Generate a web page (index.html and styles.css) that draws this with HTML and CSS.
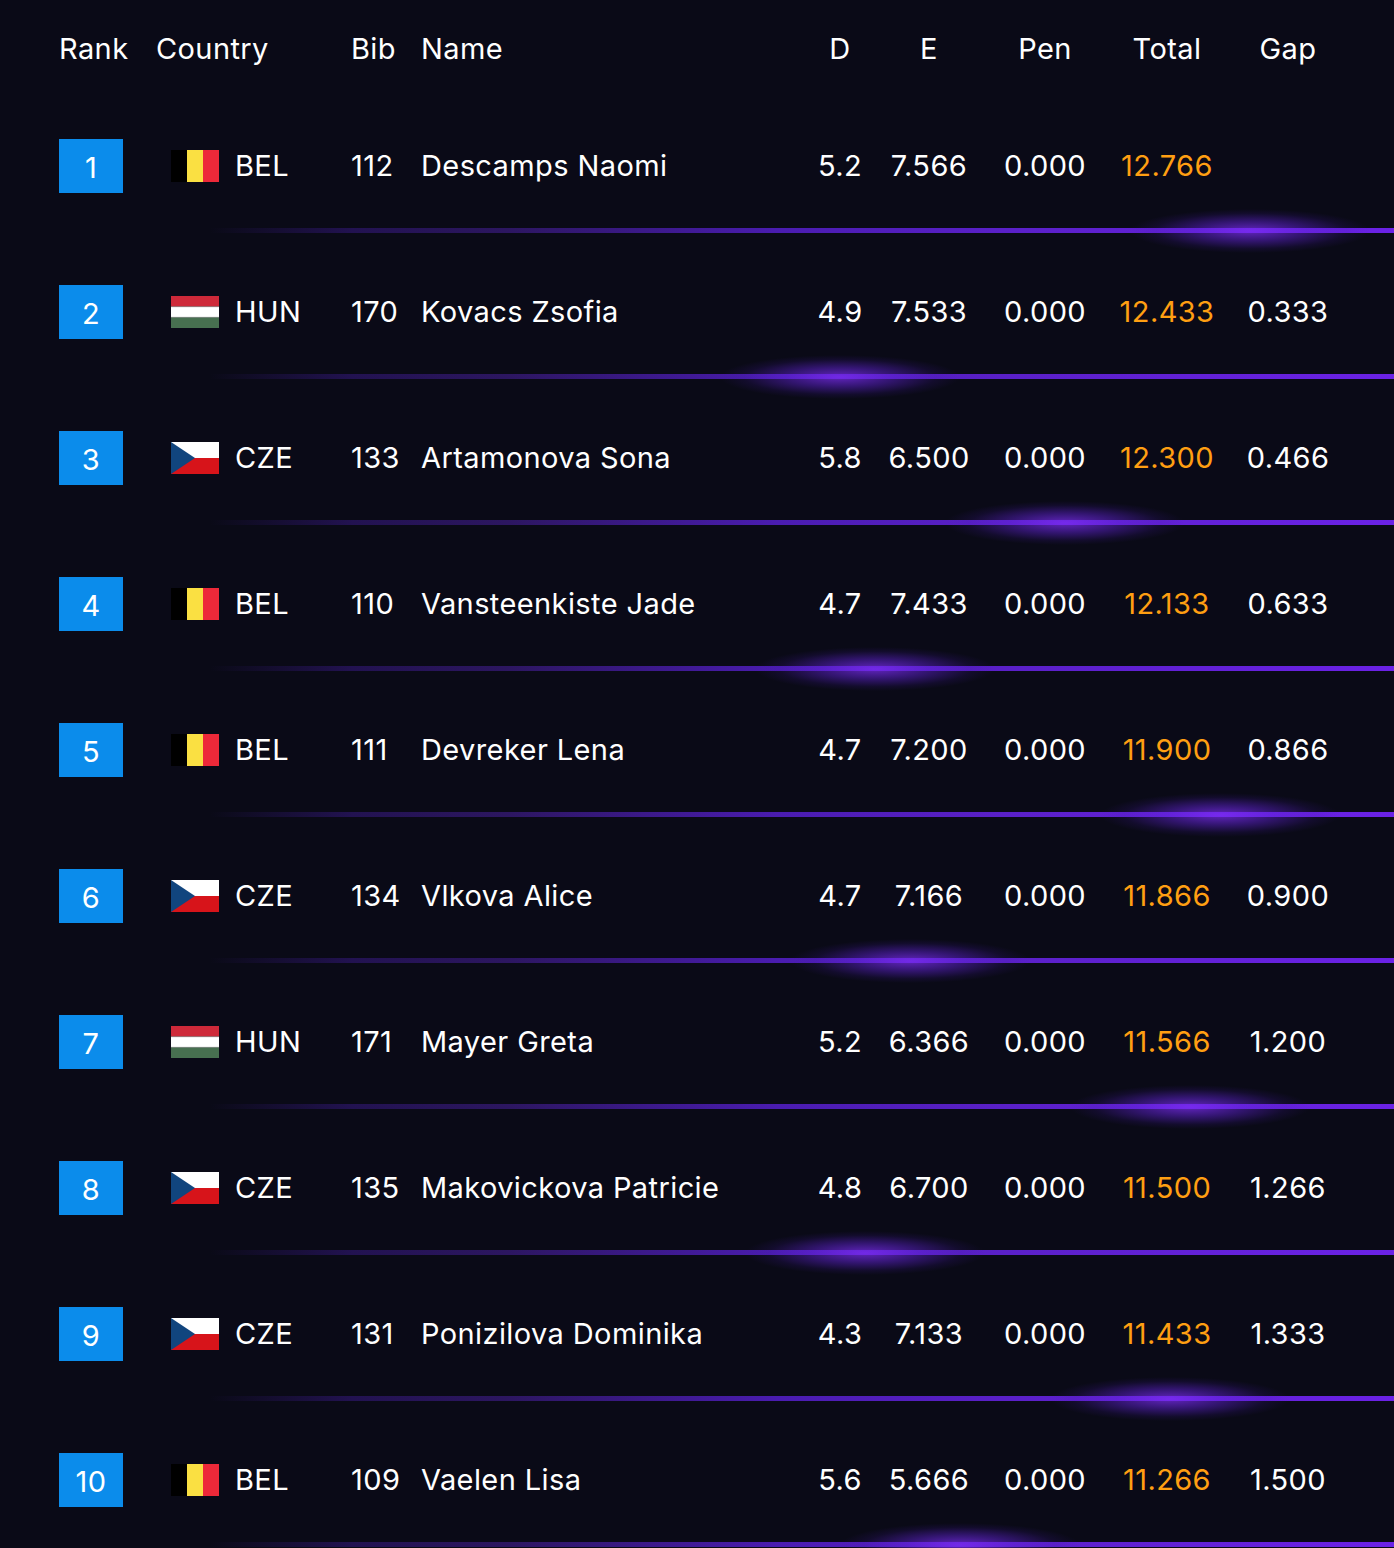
FILE: index.html
```html
<!DOCTYPE html>
<html lang="en">
<head>
<meta charset="utf-8">
<title>Results</title>
<link rel="stylesheet" href="styles.css">
</head>
<body>
<div class="board">
  <div class="head">
    <div class="c-rank">Rank</div>
    <div class="c-country">Country</div>
    <div class="c-bib">Bib</div>
    <div class="c-name">Name</div>
    <div class="c-num">D</div>
    <div class="c-num">E</div>
    <div class="c-num">Pen</div>
    <div class="c-num">Total</div>
    <div class="c-num">Gap</div>
  </div>

  <div class="row">
    <div class="cells">
      <div class="c-rank"><span class="badge">1</span></div>
      <div class="c-country flagcell"><svg class="flag" viewBox="0 0 48 32"><rect width="16" height="32" fill="#000"/><rect x="16" width="16" height="32" fill="#fae042"/><rect x="32" width="16" height="32" fill="#ed2939"/></svg><span>BEL</span></div>
      <div class="c-bib">112</div>
      <div class="c-name">Descamps Naomi</div>
      <div class="c-num">5.2</div>
      <div class="c-num">7.566</div>
      <div class="c-num">0.000</div>
      <div class="c-num total">12.766</div>
      <div class="c-num"></div>
    </div>
    <div class="sep"><div class="glow" style="--gx:1040px"></div></div>
  </div>

  <div class="row">
    <div class="cells">
      <div class="c-rank"><span class="badge">2</span></div>
      <div class="c-country flagcell"><svg class="flag" viewBox="0 0 48 32"><rect width="48" height="11" fill="#ce2939"/><rect y="10.67" width="48" height="10.67" fill="#fff"/><rect y="21.33" width="48" height="10.67" fill="#477050"/><rect y="10.2" width="48" height="0.9" fill="#8c6d6e"/><rect y="20.9" width="48" height="0.9" fill="#7d8c80"/></svg><span>HUN</span></div>
      <div class="c-bib">170</div>
      <div class="c-name">Kovacs Zsofia</div>
      <div class="c-num">4.9</div>
      <div class="c-num">7.533</div>
      <div class="c-num">0.000</div>
      <div class="c-num total">12.433</div>
      <div class="c-num">0.333</div>
    </div>
    <div class="sep"><div class="glow" style="--gx:630px"></div></div>
  </div>

  <div class="row">
    <div class="cells">
      <div class="c-rank"><span class="badge">3</span></div>
      <div class="c-country flagcell"><svg class="flag" viewBox="0 0 48 32"><rect width="48" height="16" fill="#fff"/><rect y="16" width="48" height="16" fill="#d7141a"/><polygon points="0,0 24,16 0,32" fill="#11457e"/></svg><span>CZE</span></div>
      <div class="c-bib">133</div>
      <div class="c-name">Artamonova Sona</div>
      <div class="c-num">5.8</div>
      <div class="c-num">6.500</div>
      <div class="c-num">0.000</div>
      <div class="c-num total">12.300</div>
      <div class="c-num">0.466</div>
    </div>
    <div class="sep"><div class="glow" style="--gx:855px"></div></div>
  </div>

  <div class="row">
    <div class="cells">
      <div class="c-rank"><span class="badge">4</span></div>
      <div class="c-country flagcell"><svg class="flag" viewBox="0 0 48 32"><rect width="16" height="32" fill="#000"/><rect x="16" width="16" height="32" fill="#fae042"/><rect x="32" width="16" height="32" fill="#ed2939"/></svg><span>BEL</span></div>
      <div class="c-bib">110</div>
      <div class="c-name">Vansteenkiste Jade</div>
      <div class="c-num">4.7</div>
      <div class="c-num">7.433</div>
      <div class="c-num">0.000</div>
      <div class="c-num total">12.133</div>
      <div class="c-num">0.633</div>
    </div>
    <div class="sep"><div class="glow" style="--gx:665px"></div></div>
  </div>

  <div class="row">
    <div class="cells">
      <div class="c-rank"><span class="badge">5</span></div>
      <div class="c-country flagcell"><svg class="flag" viewBox="0 0 48 32"><rect width="16" height="32" fill="#000"/><rect x="16" width="16" height="32" fill="#fae042"/><rect x="32" width="16" height="32" fill="#ed2939"/></svg><span>BEL</span></div>
      <div class="c-bib">111</div>
      <div class="c-name">Devreker Lena</div>
      <div class="c-num">4.7</div>
      <div class="c-num">7.200</div>
      <div class="c-num">0.000</div>
      <div class="c-num total">11.900</div>
      <div class="c-num">0.866</div>
    </div>
    <div class="sep"><div class="glow" style="--gx:1010px"></div></div>
  </div>

  <div class="row">
    <div class="cells">
      <div class="c-rank"><span class="badge">6</span></div>
      <div class="c-country flagcell"><svg class="flag" viewBox="0 0 48 32"><rect width="48" height="16" fill="#fff"/><rect y="16" width="48" height="16" fill="#d7141a"/><polygon points="0,0 24,16 0,32" fill="#11457e"/></svg><span>CZE</span></div>
      <div class="c-bib">134</div>
      <div class="c-name">Vlkova Alice</div>
      <div class="c-num">4.7</div>
      <div class="c-num">7.166</div>
      <div class="c-num">0.000</div>
      <div class="c-num total">11.866</div>
      <div class="c-num">0.900</div>
    </div>
    <div class="sep"><div class="glow" style="--gx:700px"></div></div>
  </div>

  <div class="row">
    <div class="cells">
      <div class="c-rank"><span class="badge">7</span></div>
      <div class="c-country flagcell"><svg class="flag" viewBox="0 0 48 32"><rect width="48" height="11" fill="#ce2939"/><rect y="10.67" width="48" height="10.67" fill="#fff"/><rect y="21.33" width="48" height="10.67" fill="#477050"/><rect y="10.2" width="48" height="0.9" fill="#8c6d6e"/><rect y="20.9" width="48" height="0.9" fill="#7d8c80"/></svg><span>HUN</span></div>
      <div class="c-bib">171</div>
      <div class="c-name">Mayer Greta</div>
      <div class="c-num">5.2</div>
      <div class="c-num">6.366</div>
      <div class="c-num">0.000</div>
      <div class="c-num total">11.566</div>
      <div class="c-num">1.200</div>
    </div>
    <div class="sep"><div class="glow" style="--gx:980px"></div></div>
  </div>

  <div class="row">
    <div class="cells">
      <div class="c-rank"><span class="badge">8</span></div>
      <div class="c-country flagcell"><svg class="flag" viewBox="0 0 48 32"><rect width="48" height="16" fill="#fff"/><rect y="16" width="48" height="16" fill="#d7141a"/><polygon points="0,0 24,16 0,32" fill="#11457e"/></svg><span>CZE</span></div>
      <div class="c-bib">135</div>
      <div class="c-name">Makovickova Patricie</div>
      <div class="c-num">4.8</div>
      <div class="c-num">6.700</div>
      <div class="c-num">0.000</div>
      <div class="c-num total">11.500</div>
      <div class="c-num">1.266</div>
    </div>
    <div class="sep"><div class="glow" style="--gx:655px"></div></div>
  </div>

  <div class="row">
    <div class="cells">
      <div class="c-rank"><span class="badge">9</span></div>
      <div class="c-country flagcell"><svg class="flag" viewBox="0 0 48 32"><rect width="48" height="16" fill="#fff"/><rect y="16" width="48" height="16" fill="#d7141a"/><polygon points="0,0 24,16 0,32" fill="#11457e"/></svg><span>CZE</span></div>
      <div class="c-bib">131</div>
      <div class="c-name">Ponizilova Dominika</div>
      <div class="c-num">4.3</div>
      <div class="c-num">7.133</div>
      <div class="c-num">0.000</div>
      <div class="c-num total">11.433</div>
      <div class="c-num">1.333</div>
    </div>
    <div class="sep"><div class="glow" style="--gx:960px"></div></div>
  </div>

  <div class="row">
    <div class="cells">
      <div class="c-rank"><span class="badge">10</span></div>
      <div class="c-country flagcell"><svg class="flag" viewBox="0 0 48 32"><rect width="16" height="32" fill="#000"/><rect x="16" width="16" height="32" fill="#fae042"/><rect x="32" width="16" height="32" fill="#ed2939"/></svg><span>BEL</span></div>
      <div class="c-bib">109</div>
      <div class="c-name">Vaelen Lisa</div>
      <div class="c-num">5.6</div>
      <div class="c-num">5.666</div>
      <div class="c-num">0.000</div>
      <div class="c-num total">11.266</div>
      <div class="c-num">1.500</div>
    </div>
    <div class="sep"><div class="glow" style="--gx:750px"></div></div>
  </div>
</div>
</body>
</html>
```

FILE: styles.css
```css
html, body {
  margin: 0;
  padding: 0;
  background: #0a0a17;
}

body {
  width: 1394px;
  height: 1548px;
  overflow: hidden;
  font-family: Inter, Lato, "Liberation Sans", sans-serif;
  color: #ffffff;
  font-size: 29px;
  letter-spacing: 0.4px;
}

.board {
  display: flex;
  flex-direction: column;
}

.head,
.cells {
  display: grid;
  grid-template-columns: 97px 195px 70px 379px 80px 98px 134px 110px 132px;
  padding-left: 59px;
  align-items: center;
}

.head {
  height: 96px;
}

.row {
  height: 146px;
  display: flex;
  flex-direction: column;
}

.cells {
  margin-top: 43px;
  height: 54px;
  line-height: 52px;
}

.c-num {
  text-align: center;
}

.badge {
  display: flex;
  align-items: center;
  justify-content: center;
  width: 64px;
  height: 54px;
  background: #0b8ceb;
  color: #fff;
  line-height: 1;
  padding-top: 2px;
  box-sizing: border-box;
}

.flagcell {
  display: flex;
  align-items: center;
  padding-left: 15px;
  gap: 16px;
}

.flag {
  width: 48px;
  height: 32px;
  display: block;
  flex: none;
}

.total {
  color: #ff9f12;
}

.sep {
  position: relative;
  margin-top: 35px;
  margin-left: 210px;
  height: 5px;
  background: linear-gradient(to right,
    rgba(60, 25, 140, 0) 0%,
    rgba(40, 20, 95, 0.8) 12%,
    #2c1660 25%,
    #4a1cb0 48%,
    #5a20c8 67%,
    #6b22e6 100%);
}

.glow {
  position: absolute;
  left: var(--gx);
  top: 50%;
  width: 240px;
  height: 44px;
  transform: translate(-50%, -50%);
  background: radial-gradient(ellipse closest-side at center,
    rgba(125, 45, 245, 0.75) 0%,
    rgba(100, 35, 220, 0.45) 45%,
    rgba(70, 25, 170, 0.15) 80%,
    rgba(60, 20, 150, 0) 100%);
  pointer-events: none;
}
```
